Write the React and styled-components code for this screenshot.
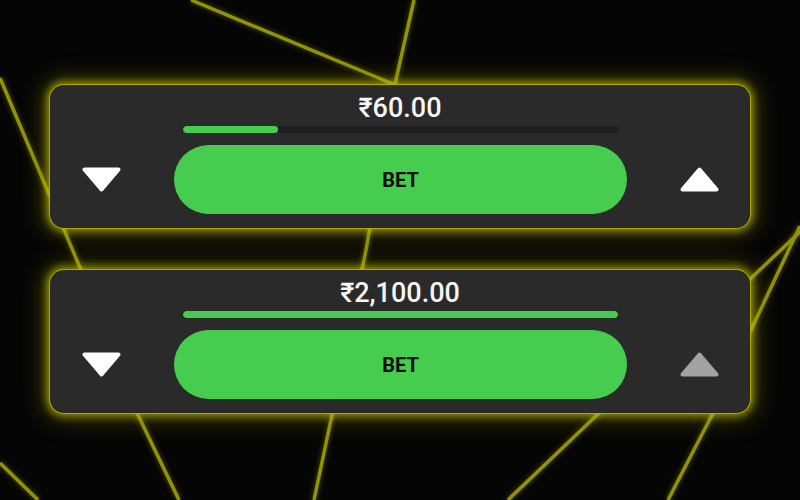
import React from "react";
import styled, { createGlobalStyle } from "styled-components";

const Global = createGlobalStyle`
  html, body { margin: 0; padding: 0; background: #050505; }
  body { font-family: Roboto, "Noto Sans", "Liberation Sans", sans-serif; }
  #root { min-height: 500px; }
`;

const Stage = styled.div`
  position: relative;
  width: 800px;
  height: 500px;
  overflow: hidden;
  background: #050505;
`;

const Backdrop = styled.svg`
  position: absolute;
  inset: 0;
  width: 800px;
  height: 500px;
  z-index: 0;
`;

const Stack = styled.div`
  position: relative;
  z-index: 1;
  display: flex;
  flex-direction: column;
  gap: 42px;
  width: 700px;
  margin: 0 auto;
  padding-top: 85px;
`;

const Panel = styled.div`
  display: flex;
  flex-direction: column;
  align-items: center;
  padding: 8px 0 14px;
  background: #2a2a2a;
  border-radius: 14px;
  box-shadow:
    0 0 0 1px rgba(175, 175, 0, 0.9),
    0 0 9px 3px rgba(205, 205, 0, 0.7),
    0 0 22px 8px rgba(140, 140, 0, 0.35);
`;

const Amount = styled.div`
  color: #f6f6f6;
  font-size: 27px;
  font-weight: 500;
  line-height: 30px;
`;

const Track = styled.div`
  width: 435px;
  height: 7px;
  margin-top: 3px;
  border-radius: 4px;
  background: #1f1f1f;
  overflow: hidden;
`;

const Fill = styled.div`
  height: 100%;
  border-radius: 4px;
  background: #46cd4f;
`;

const Controls = styled.div`
  display: flex;
  align-items: center;
  gap: 53px;
  align-self: stretch;
  margin-top: 12px;
  padding: 0 31px 0 32px;
`;

const BetButton = styled.button`
  flex: 1;
  height: 69px;
  border: none;
  border-radius: 35px;
  background: #46cd4f;
  color: #0d0d0d;
  font-family: Roboto, "Noto Sans", "Liberation Sans", sans-serif;
  font-size: 20px;
  font-weight: 700;
  cursor: pointer;
`;

const ArrowButton = styled.button`
  display: flex;
  width: 39px;
  height: 25px;
  padding: 0;
  border: none;
  background: transparent;
  color: ${(p) => (p.$dim ? "#a2a2a2" : "#ffffff")};
  cursor: pointer;
`;

function Arrow({ dir, dim }) {
  const pts = dir === "down" ? "2.5,2.5 36.5,2.5 19.5,22.5" : "19.5,2.5 36.5,22.5 2.5,22.5";
  return (
    <ArrowButton $dim={dim} aria-label={dir === "down" ? "decrease" : "increase"}>
      <svg width="39" height="25" viewBox="0 0 39 25">
        <polygon points={pts} fill="currentColor" stroke="currentColor" strokeWidth="4" strokeLinejoin="round" />
      </svg>
    </ArrowButton>
  );
}

function BetPanel({ amount, progress, upDim }) {
  return (
    <Panel>
      <Amount>{amount}</Amount>
      <Track>
        <Fill style={{ width: `${progress}%` }} />
      </Track>
      <Controls>
        <Arrow dir="down" />
        <BetButton>BET</BetButton>
        <Arrow dir="up" dim={upDim} />
      </Controls>
    </Panel>
  );
}

const lines = [
  "191,0 393,84",
  "414,0 395,84 366,250 332,415 314,500",
  "0,78 81,270 138,415 179,500",
  "0,463 38,500",
  "804,228 747,282 597,415 508,500",
  "800,226 750,332 712,415 668,500",
];

export default function App() {
  return (
    <Stage>
      <Global />
      <Backdrop viewBox="0 0 800 500">
        <defs>
          <filter id="glow" x="-10%" y="-10%" width="120%" height="120%">
            <feGaussianBlur stdDeviation="2" />
          </filter>
        </defs>
        {lines.map((l) => (
          <polyline key={l + "g"} points={l} fill="none" stroke="#a0a000" strokeWidth="6" strokeOpacity="0.3" filter="url(#glow)" />
        ))}
        {lines.map((l) => (
          <polyline key={l} points={l} fill="none" stroke="#929204" strokeWidth="3.5" strokeLinejoin="round" />
        ))}
      </Backdrop>
      <Stack>
        <BetPanel amount="₹60.00" progress={22} />
        <BetPanel amount="₹2,100.00" progress={100} upDim />
      </Stack>
    </Stage>
  );
}
